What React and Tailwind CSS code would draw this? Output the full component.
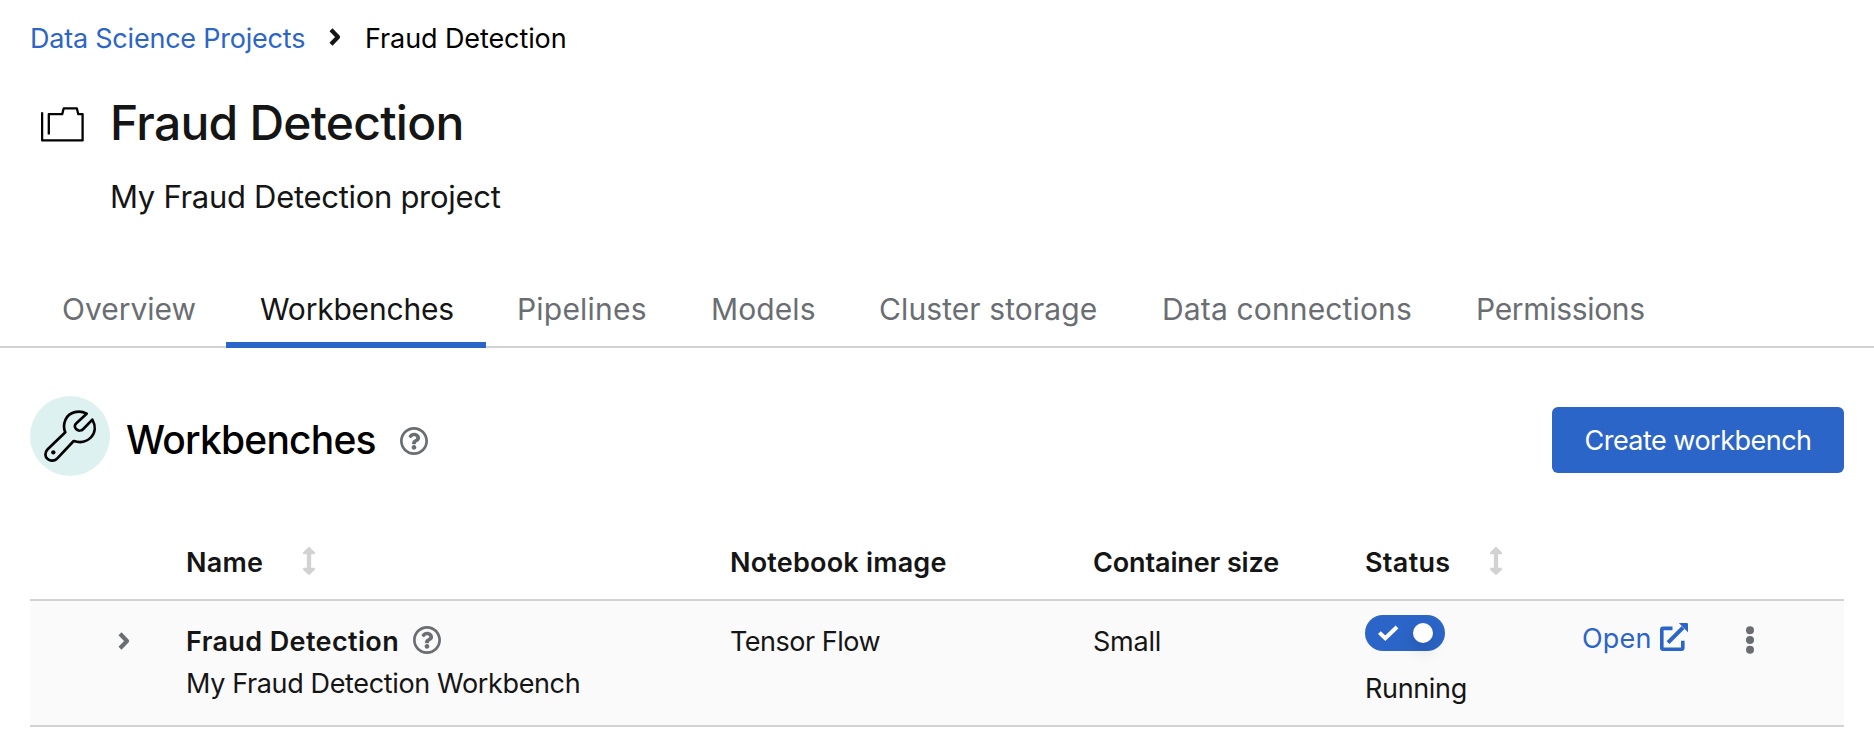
import React from "react";

function Chevron({ className }) {
  return (
    <svg viewBox="0 0 12 18" className={className} fill="none" stroke="currentColor" strokeWidth="4.2">
      <path d="M2 1.8 L9 9 L2 16.2" strokeLinejoin="round" />
    </svg>
  );
}

function Help({ className }) {
  return (
    <svg viewBox="8 8 496 496" className={className} fill="currentColor">
      <path d="M256 8C119.043 8 8 119.083 8 256c0 136.997 111.043 248 248 248s248-111.003 248-248C504 119.083 392.957 8 256 8zm0 448c-110.532 0-200-89.431-200-200 0-110.495 89.472-200 200-200 110.491 0 200 89.471 200 200 0 110.53-89.431 200-200 200zm107.244-255.2c0 67.052-72.421 68.084-72.421 92.863V300c0 6.627-5.373 12-12 12h-45.647c-6.627 0-12-5.373-12-12v-8.659c0-35.745 27.1-50.034 47.579-61.516 17.561-9.845 28.324-16.541 28.324-29.579 0-17.246-21.999-28.693-39.784-28.693-23.189 0-33.894 10.977-48.942 29.969-4.057 5.12-11.46 6.071-16.666 2.124l-27.824-21.098c-5.107-3.872-6.251-11.066-2.644-16.363C184.846 131.491 214.94 112 261.794 112c49.071 0 101.45 38.304 101.45 88.8zM298 368c0 23.159-18.841 42-42 42s-42-18.841-42-42 18.841-42 42-42 42 18.841 42 42z" />
    </svg>
  );
}

function Sort({ className }) {
  return (
    <svg viewBox="0 0 256 512" className={className} fill="currentColor">
      <path d="M214.059 377.941H168V134.059h46.059c21.382 0 32.09-25.851 16.971-40.971L144.971 7.029c-9.373-9.373-24.568-9.373-33.941 0L24.971 93.088c-15.119 15.119-4.411 40.971 16.971 40.971H88v243.882H41.941c-21.382 0-32.09 25.851-16.971 40.971l86.059 86.059c9.373 9.373 24.568 9.373 33.941 0l86.059-86.059c15.12-15.119 4.412-40.971-16.97-40.971z" />
    </svg>
  );
}

function Wrench() {
  return (
    <svg viewBox="30 48 240 240" className="size-[80px]" fill="none" stroke="#000" strokeWidth="8" strokeLinejoin="round">
      <path d="M200 101 C178 89 148 95 137 118 C130 134 131 147 136 157 L83 208 C73 218 75 231 83 237 C92 245 105 243 112 235 L161 183 C180 189 200 185 213 172 C226 158 228 138 217 119 L190 147 C184 153 175 153 169 148 C163 142 163 135 169 130 Z" />
      <circle cx="100" cy="217" r="6.5" fill="#000" stroke="none" />
    </svg>
  );
}

const tabs = [
  ["Overview", "w-[164px]", "tracking-[0px]"],
  ["Workbenches", "w-[260px]", "tracking-[-0.2px]"],
  ["Pipelines", "w-[194px] ml-[31px]", "tracking-[0.2px]"],
  ["Models", "w-[168px]", "tracking-[0.1px]"],
  ["Cluster storage", "w-[283px]", "tracking-[0.1px]"],
  ["Data connections", "w-[314px]", "tracking-[0.15px]"],
  ["Permissions", "w-[234px]", "tracking-[-0.32px]"],
];

export default function App() {
  return (
    <main className="h-[748px] w-[1874px] overflow-hidden bg-white font-['Inter',sans-serif] text-[27px] leading-[42px] whitespace-nowrap text-[#151515]">
      <nav className="flex h-[78px] items-center pl-[30px]">
        <a className="w-[299px] tracking-[-0.22px] text-[#2b65c7]">Data Science Projects</a>
        <Chevron className="mb-[4px] h-[18px] w-[12px]" />
        <span className="ml-[24px] tracking-[-0.1px] text-black">Fraud Detection</span>
      </nav>

      <header className="flex h-[198px] pl-[41px]">
        <svg viewBox="0 0 44 36" className="mt-[29px] h-[36px] w-[44px]" fill="none" stroke="#000" strokeWidth="2.3">
          <path d="M1.1 5.3V33.4H41.6V7.2H37.3L35.8 1.3H22.7L21.2 7.2H7.8V27.5" strokeLinejoin="round" />
        </svg>
        <div className="ml-[25px]">
          <h1 className="mt-[19px] text-[48px] leading-[52px] font-medium tracking-[-0.76px]">Fraud Detection</h1>
          <p className="mt-[27px] text-[31px] leading-[42px] tracking-[-0.3px]">My Fraud Detection project</p>
        </div>
      </header>

      <div className="flex h-[72px] border-b-2 border-[#d2d2d2] pl-[62px] text-[30px] text-[#6a6e73]">
        {tabs.map(([t, w, tr]) => (
          <div key={t} className={t === "Workbenches" ? "h-[72px] w-[260px] border-b-[6px] border-[#2b65c7] pl-[34px] text-[#151515]" : "h-[70px] " + w}>
            <div className={"pt-[12px] " + tr}>{t}</div>
          </div>
        ))}
      </div>

      <section className="flex h-[176px] items-start px-[30px] pt-[48px]">
        <div className="size-[80px] rounded-full bg-[#ddf1f0]">
          <Wrench />
        </div>
        <h2 className="mt-[23px] ml-[16px] w-[274px] text-[39px] font-medium tracking-[-0.8px] text-black">Workbenches</h2>
        <Help className="mt-[31px] size-[28px] text-[#6a6e73]" />
        <button className="mt-[11px] ml-auto h-[66px] w-[292px] rounded-[6px] bg-[#2b65c7] pt-[2px] tracking-[-0.52px] text-white">Create workbench</button>
      </section>

      <section className="mx-[30px]">
        <div className="grid h-[77px] grid-cols-[156px_544px_363px_272px_217px_164px_1fr] border-b-2 border-[#d2d2d2] font-semibold">
          <span />
          <div className="flex">
            <span className="w-[112px] pt-[18px] tracking-[0.2px]">Name</span>
            <Sort className="mt-[23px] h-[28px] w-[22px] text-[#d2d2d2]" />
          </div>
          <span className="pt-[18px] tracking-[0.2px]">Notebook image</span>
          <span className="pt-[18px] tracking-[-0.12px]">Container size</span>
          <div className="flex">
            <span className="w-[120px] pt-[18px] tracking-[0.3px]">Status</span>
            <Sort className="mt-[23px] h-[28px] w-[22px] text-[#d2d2d2]" />
          </div>
        </div>

        <div className="grid h-[126px] grid-cols-[156px_544px_363px_272px_217px_164px_1fr] border-b-2 border-[#d2d2d2] bg-[#fafafa]">
          <Chevron className="mt-[31px] ml-[88px] h-[18px] w-[12px] text-[#6a6e73]" />
          <div className="pt-[20px]">
            <div className="flex h-[42px]">
              <span className="w-[227px] font-semibold tracking-[0.38px]">Fraud Detection</span>
              <Help className="mt-[5px] size-[28px] text-[#6a6e73]" />
            </div>
            <p className="tracking-[-0.36px]">My Fraud Detection Workbench</p>
          </div>
          <span className="pt-[20px] tracking-[-0.5px]">Tensor Flow</span>
          <span className="pt-[20px] tracking-[-0.2px]">Small</span>
          <div className="pt-[14px]">
            <div className="flex h-[36px] w-[80px] items-center justify-between rounded-full bg-[#2b65c7] px-[12px]">
              <svg viewBox="0 0 22 18" className="h-[18px] w-[22px]" fill="none" stroke="#fff" strokeWidth="4">
                <path d="M2.4 8.6 L8.3 14.3 L20 3" />
              </svg>
              <span className="size-[20px] rounded-full bg-white shadow-[0_8px_16px_rgba(3,3,3,0.14)]" />
            </div>
            <p className="mt-[17px] tracking-[-0.35px]">Running</p>
          </div>
          <a className="flex text-[#2b65c7]">
            <span className="w-[78px] pt-[17px] tracking-[0.2px]">Open</span>
            <svg viewBox="0 0 28 28" className="mt-[22px] h-[28px] w-[28px]" fill="none" stroke="currentColor" strokeWidth="3.6">
              <path d="M12.5 5.4H3.2Q1.8 5.4 1.8 6.8V24.8Q1.8 26.2 3.2 26.2H21.4Q22.8 26.2 22.8 24.8V17.7" />
              <path d="M8 19.6 L23 4.6" strokeWidth="4" />
              <path d="M18.8 0H26.8Q28 0 28 1.2V9.2Z" fill="currentColor" stroke="none" />
            </svg>
          </a>
          <svg viewBox="0 0 8 28" className="mt-[25px] h-[28px] w-[8px]" fill="#6a6e73">
            <circle cx="4" cy="4.3" r="4" />
            <circle cx="4" cy="14" r="4" />
            <circle cx="4" cy="23.7" r="4" />
          </svg>
        </div>
      </section>
    </main>
  );
}
